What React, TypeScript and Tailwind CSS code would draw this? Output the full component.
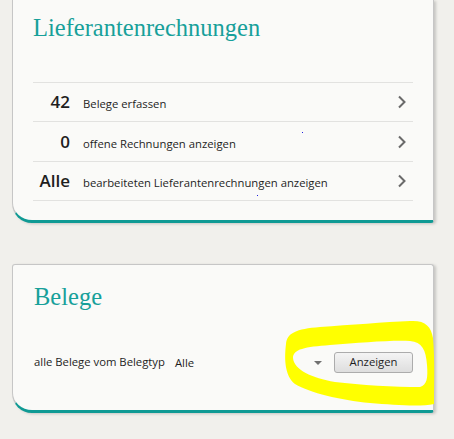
import React from "react"

const sans = { fontFamily: '"Open Sans", "Noto Sans", sans-serif' }
const serif = { fontFamily: '"Liberation Serif", "DejaVu Serif", serif' }

type Row = { count: string; label: string; h: string; dot?: { x: number; y: number } }

const rows: Row[] = [
  { count: "42", label: "Belege erfassen", h: "h-[39px]" },
  { count: "0", label: "offene Rechnungen anzeigen", h: "h-[40px]", dot: { x: 269, y: 10 } },
  { count: "Alle", label: "bearbeiteten Lieferantenrechnungen anzeigen", h: "h-[39px]", dot: { x: 224, y: 33 } },
]

function Chevron() {
  return (
    <svg width="10" height="14" viewBox="0 0 10 14" className="mr-[6px]">
      <polyline points="2,1.5 7.5,7 2,12.5" fill="none" stroke="#6a6a6a" strokeWidth="2" />
    </svg>
  )
}

function Scribble() {
  return (
    <svg width="454" height="439" className="pointer-events-none absolute left-0 top-0">
      <path
        fillRule="evenodd"
        fill="#ffff00"
        d="M286 344 C287 333 296 329 320 327 C350 325 385 322 410 321 C425 320 431 326 433 338 C435 360 434 385 434 404 C420 407 395 405 370 403 C340 400 310 393 295 384 C285 376 284 360 286 344 Z
           M293 358 C293 349 305 347 330 345 C360 343 390 340 410 341 C422 342 426 350 427 365 C428 378 427 385 420 387 C395 387 360 385 335 382 C312 378 294 370 293 358 Z"
      />
    </svg>
  )
}

export default function App() {
  return (
    <div className="relative min-h-screen bg-[#f1f0ec] pb-8" style={sans}>
      {/* Lieferantenrechnungen */}
      <div className="ml-[12px] w-[422px] rounded-b-[3px] rounded-bl-[20px] border-x border-b-[3px] border-x-[#c6c6c6] border-b-[#0f9a94] bg-[#fafaf8] px-[20px] pb-[19px] pt-[14px] shadow-[2px_1px_3px_rgba(0,0,0,0.18)]">
        <h2 className="text-[24.5px] leading-[28px] text-[#17a09a]" style={serif}>
          Lieferantenrechnungen
        </h2>
        <div className="mt-[40px] border-t border-[#e2e2e0]">
          {rows.map((r) => (
            <div key={r.count} className={`relative flex items-center justify-between border-b border-[#e2e2e0] ${r.h}`}>
              <div className="flex items-baseline">
                <span className="w-[37px] text-right text-[17px] font-semibold text-[#1e1e1e]">{r.count}</span>
                <span className="ml-[13px] text-[11.3px] text-[#1e1e1e]">{r.label}</span>
              </div>
              <Chevron />
              {r.dot && (
                <span
                  className="absolute h-[1px] w-[1px] bg-[#2020e0]"
                  style={{ left: r.dot.x, top: r.dot.y }}
                />
              )}
            </div>
          ))}
        </div>
      </div>

      {/* Belege */}
      <div className="ml-[12px] mt-[41px] w-[422px] rounded-[3px] rounded-bl-[20px] border border-b-[3px] border-[#c6c6c6] border-b-[#0f9a94] bg-[#fafaf8] px-[20px] pb-[37px] pt-[18px] shadow-[2px_1px_3px_rgba(0,0,0,0.18)]">
        <h2 className="pl-[1px] text-[24.5px] leading-[28px] text-[#17a09a]" style={serif}>
          Belege
        </h2>
        <div className="mt-[40px] flex h-[22px] items-center pl-[1px]">
          <span className="text-[11.3px] text-[#1e1e1e]">alle Belege vom Belegtyp</span>
          <div className="ml-[10px] flex flex-1 items-center justify-between pt-[3px]">
            <span className="text-[11.3px] text-[#1e1e1e]">Alle</span>
            <svg width="8" height="5" viewBox="0 0 8 5" className="mr-[12px]">
              <polygon points="0,0 8,0 4,4" fill="#707070" />
            </svg>
          </div>
          <button className="h-[21px] w-[79px] rounded-[3px] border border-[#acacac] bg-gradient-to-b from-[#f4f4f4] to-[#dedede] text-[11.3px] leading-none text-[#1e1e1e]">
            Anzeigen
          </button>
        </div>
      </div>

      <Scribble />
    </div>
  )
}
